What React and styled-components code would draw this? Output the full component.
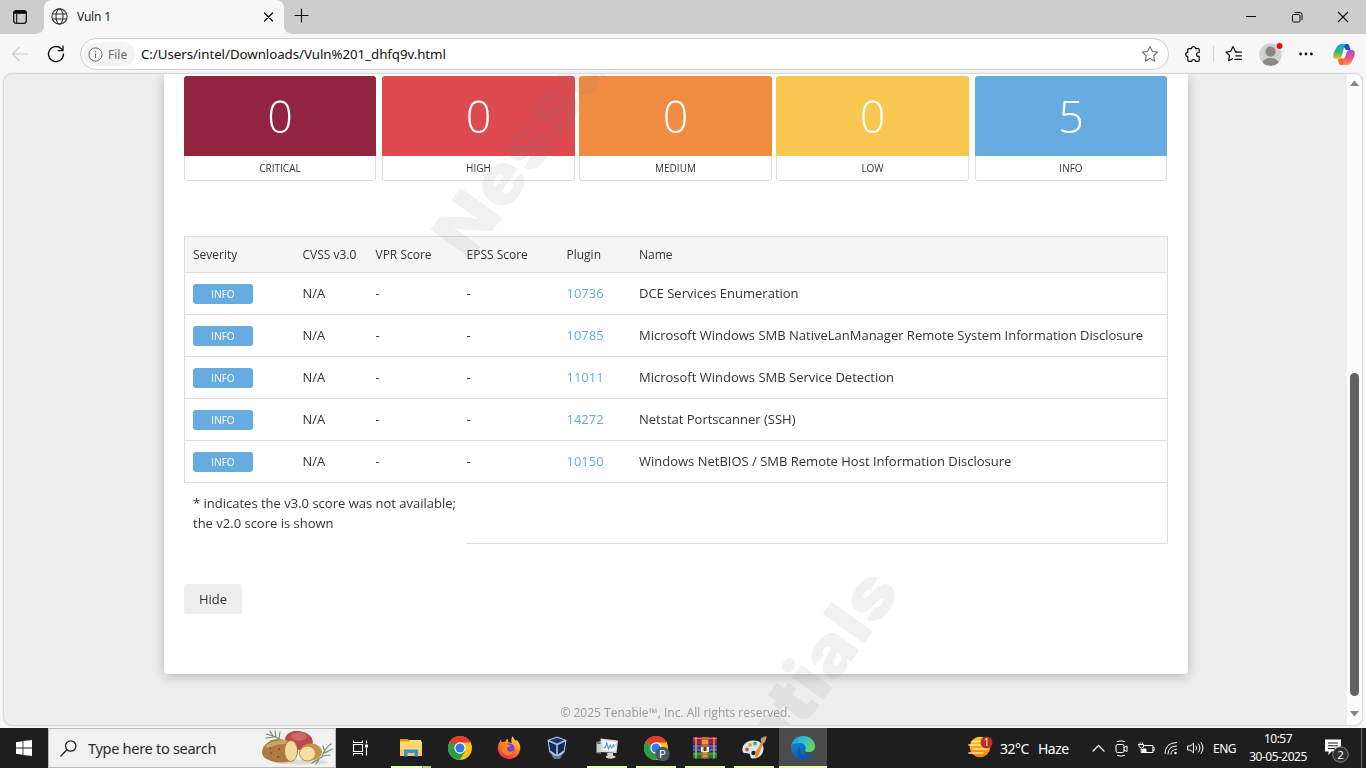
import React from "react";
import styled, { createGlobalStyle } from "styled-components";

const UI = `"Noto Sans", "Open Sans", sans-serif`;

const Global = createGlobalStyle`
  *, *::before, *::after { box-sizing: border-box; }
  body { margin: 0; overflow: hidden; font-family: "Open Sans", sans-serif; color: #333; }
  svg { display: block; flex: none; }
`;

const Screen = styled.div`
  width: 1366px;
  height: 768px;
  display: flex;
  flex-direction: column;
  background: #f7f7f7;
  overflow: hidden;
`;

/* ---------- browser chrome ---------- */
const TabStrip = styled.div`
  height: 34px;
  flex: none;
  display: flex;
  background: #cdcdcd;
`;
const TabActions = styled.div`
  width: 44px;
  display: flex;
  align-items: center;
  padding-left: 12px;
  border-bottom-right-radius: 8px;
`;
const Tab = styled.div`
  position: relative;
  width: 240px;
  display: flex;
  align-items: center;
  padding: 0 10px 2px 7px;
  background: #f7f7f7;
  border-radius: 8px 8px 0 0;
  &::before, &::after {
    content: "";
    position: absolute;
    bottom: 0;
    width: 8px;
    height: 8px;
  }
  &::before { left: -8px; background: radial-gradient(circle at 0 0, #cdcdcd 7.6px, #f7f7f7 8.2px); }
  &::after { right: -8px; background: radial-gradient(circle at 100% 0, #cdcdcd 7.6px, #f7f7f7 8.2px); }
`;
const TabTitle = styled.span`
  flex: 1;
  margin-left: 9px;
  font: 12px ${UI};
  letter-spacing: -0.2px;
  color: #1b1b1b;
`;
const NewTab = styled.div`
  padding: 8px 0 0 10px;
  flex: 1;
`;
const WindowButtons = styled.div`
  display: flex;
  align-items: center;
  gap: 34px;
  padding-right: 17px;
`;
const Toolbar = styled.div`
  height: 39px;
  flex: none;
  display: flex;
  align-items: center;
  padding: 1px 11px 0 11px;
`;
const NavButtons = styled.div`
  width: 69px;
  display: flex;
  align-items: center;
  gap: 18px;
`;
const AddressBar = styled.div`
  width: 1089px;
  height: 32px;
  display: flex;
  align-items: center;
  padding: 0 9px 0 3px;
  background: #fff;
  border: 1px solid #cfcfcf;
  border-radius: 16px;
`;
const FileChip = styled.div`
  width: 51px;
  height: 24px;
  display: flex;
  align-items: center;
  gap: 5px;
  padding-left: 4px;
  border-radius: 12px;
  background: #f3f3f3;
  font: 12px ${UI};
  color: #6b6b6b;
`;
const Url = styled.span`
  flex: 1;
  margin-left: 6px;
  font: 13.3px ${UI};
  letter-spacing: -0.05px;
  color: #111;
`;
const ToolIcons = styled.div`
  flex: 1;
  display: grid;
  grid-template-columns: 28.5px 12px 33.5px 40.5px 34px 22px;
  align-items: center;
  padding-left: 15.5px;
  margin-right: -1px;
`;
const Divider = styled.span`
  width: 1px;
  height: 16px;
  background: #cfcfcf;
`;

/* ---------- report page ---------- */
const Viewport = styled.div`
  position: relative;
  height: 651px;
  flex: none;
  margin: 1px 4px 3px;
  display: flex;
  border-radius: 8px;
  background: #eee;
  overflow: hidden;
`;
const ViewportFrame = styled.div`
  height: 655px;
  flex: none;
  filter: drop-shadow(0 0 1px rgba(0, 0, 0, 0.35));
`;
const Page = styled.div`
  position: relative;
  flex: 1;
  overflow: hidden;
`;
const Card = styled.div`
  width: 1024px;
  height: 600px;
  margin-left: 160px;
  padding: 2px 20px 0;
  background: #fff;
  border-radius: 0 0 3px 3px;
  box-shadow: 0 2px 12px rgba(0, 0, 0, 0.25);
`;
const Tiles = styled.div`
  display: flex;
  margin-bottom: 55px;
`;
const Tile = styled.div`
  width: ${(p) => p.$width}px;
  height: 105px;
  margin-right: ${(p) => p.$gap}px;
  display: flex;
  flex-direction: column;
  border-radius: 3px;
  overflow: hidden;
`;
const TileCount = styled.div`
  height: 80px;
  background: ${(p) => p.$color};
  color: #fff;
  font-size: 45px;
  font-weight: 300;
  line-height: 80px;
  text-align: center;
`;
const TileLabel = styled.div`
  flex: 1;
  border: 1px solid #ddd;
  border-top: 0;
  border-radius: 0 0 3px 3px;
  font-size: 10px;
  line-height: 24px;
  text-align: center;
`;
const Table = styled.div`
  display: flex;
  flex-direction: column;
`;
const Row = styled.div`
  display: grid;
  grid-template-columns: 109.5px 73px 91px 100px 72.5px 1fr;
  align-items: center;
  height: ${(p) => (p.$head ? 37 : 42)}px;
  padding-left: 8px;
  padding-bottom: 1px;
  font-size: ${(p) => (p.$head ? 12 : 13)}px;
  border: 1px solid #ddd;
  border-top-width: ${(p) => (p.$head ? 1 : 0)}px;
  background: ${(p) => (p.$head ? "#f5f5f5" : "#fff")};
`;
const Badge = styled.span`
  width: 60px;
  height: 20px;
  margin-top: 2px;
  border-radius: 3px;
  background: #67ace1;
  color: #fff;
  font-size: 10px;
  font-weight: 500;
  line-height: 20px;
  text-align: center;
`;
const PluginLink = styled.a`
  color: #67ace1;
`;
const NoteRow = styled.div`
  display: flex;
  height: 61px;
`;
const Note = styled.div`
  width: 282px;
  padding: 10px 0 0 9px;
  font-size: 13px;
  line-height: 20px;
  white-space: nowrap;
`;
const NoteRest = styled.div`
  flex: 1;
  border: 1px solid #ddd;
  border-width: 0 1px 1px 0;
`;
const HideButton = styled.button`
  width: 58px;
  height: 30px;
  margin-top: 40px;
  padding: 0;
  border: 0;
  border-radius: 3px;
  background: #eee;
  color: #333;
  font: 13px "Open Sans", sans-serif;
`;
const Footer = styled.div`
  margin-top: 30px;
  width: 1343px;
  font-size: 12px;
  line-height: 18px;
  text-align: center;
  color: #999;
`;
const Watermark = styled.div`
  position: absolute;
  ${(p) => (p.$end ? "right" : "left")}: ${(p) => p.$x}px;
  top: ${(p) => p.$y}px;
  font-family: Inter, sans-serif;
  font-size: 70px;
  font-weight: 900;
  line-height: 70px;
  letter-spacing: 0.5px;
  white-space: nowrap;
  color: rgba(128, 128, 128, 0.11);
  transform-origin: ${(p) => (p.$end ? "100%" : "0")} 60.5px;
  transform: rotate(-54deg) scaleX(1.09);
  pointer-events: none;
`;
const Scrollbar = styled.div`
  width: 15px;
  display: flex;
  flex-direction: column;
  align-items: center;
  background: #fcfcfc;
  padding: 6px 0 8px;
`;
const Thumb = styled.div`
  width: 9px;
  height: 323px;
  margin: 287px 0 15px;
  border-radius: 5px;
  background: #636363;
`;

/* ---------- taskbar ---------- */
const Taskbar = styled.div`
  height: 40px;
  flex: none;
  display: flex;
  background: #1e1e1e;
  color: #fff;
`;
const Square = styled.div`
  width: 48px;
  display: flex;
  align-items: center;
  justify-content: center;
`;
const Search = styled.div`
  width: 288px;
  display: flex;
  align-items: center;
  padding: 0 2px 0 11px;
  border: 1px solid #b9b9b9;
  background: #f1f1f1;
`;
const SearchText = styled.span`
  flex: 1;
  margin-left: 11px;
  font: 14.6px ${UI};
  letter-spacing: -0.33px;
  color: #2d2d2d;
  white-space: nowrap;
`;
const Apps = styled.div`
  display: flex;
  flex: 1;
  padding-left: 2px;
`;
const AppButton = styled.div`
  width: ${(p) => (p.$active ? 48 : 49)}px;
  margin-left: ${(p) => (p.$active ? 1 : 0)}px;
  display: flex;
  flex-direction: column;
  align-items: center;
  justify-content: space-between;
  padding-top: 8px;
  background: ${(p) => (p.$active ? "#4b4b4b" : "transparent")};
`;
const Underline = styled.span`
  width: ${(p) => (p.$active ? 48 : 40)}px;
  height: 2px;
  background: ${(p) => (p.$split ? "linear-gradient(90deg, #e3ffb4 31px, #82926a 31px 32px, #b5cc90 32px)" : p.$on ? "#e3ffb4" : "transparent")};
`;
const Weather = styled.div`
  width: 124px;
  display: flex;
  align-items: center;
  font: 14px ${UI};
  letter-spacing: -0.5px;
  white-space: nowrap;
`;
const Temp = styled.span`
  width: 38px;
  margin-left: 7px;
`;
const Tray = styled.div`
  width: 112px;
  display: flex;
  align-items: center;
  justify-content: space-between;
`;
const Lang = styled.span`
  width: 27px;
  margin-left: 9px;
  align-self: center;
  font: 12px ${UI};
  letter-spacing: -0.5px;
`;
const Clock = styled.div`
  width: 76px;
  display: flex;
  flex-direction: column;
  align-items: center;
  padding-top: 2px;
  font: 12px/18px ${UI};
  letter-spacing: -0.5px;
  white-space: nowrap;
`;
const Notice = styled.div`
  padding: 10px 0 0 7px;
  width: 45px;
`;
const DesktopEdge = styled.div`
  width: 5px;
  border-left: 1px solid #6b6b6b;
`;

const line = { fill: "none", stroke: "currentColor", strokeLinecap: "round", strokeLinejoin: "round" };

const TabActionsIcon = () => (
  <svg width="16" height="16" viewBox="0 0 16 16" fill="none" stroke="#111">
    <rect x="1.7" y="1.7" width="12.6" height="12.6" rx="2.6" strokeWidth="1.3" />
    <path d="M1.7 4V4a2.3 2.3 0 0 1 2.3-2.3h8a2.3 2.3 0 0 1 2.3 2.3v.3H1.7z" fill="#111" />
    <path d="M4.7 5v9" strokeWidth="1.1" />
  </svg>
);
const Globe = () => (
  <svg width="17" height="17" viewBox="0 0 17 17" fill="none" stroke="#333" strokeWidth="1.1">
    <circle cx="8.5" cy="8.5" r="7.6" />
    <ellipse cx="8.5" cy="8.5" rx="3.5" ry="7.6" />
    <path d="M1.6 6h13.8M1.6 11h13.8" />
  </svg>
);
const Star = ({ lines }) => (
  <svg width="18" height="18" viewBox="0 0 18 18" {...line} stroke={lines ? "#111" : "#777"} strokeWidth="1.2">
    {lines ? (
      <path d="M11.5 6.5 10.3 6.3 8 1.6 5.700 6.300 1 7l3.500 3.500-.9 5.200L7.500 13.700M10.500 7.200h6M11 10.800h5.500M9.800 14.400h6.700" />
    ) : (
      <path d="m9 1.400 2.350 4.900 5.350.7-3.900 3.750.95 5.350L9 13.500l-4.750 2.600.95-5.350L1.300 7l5.350-.7z" />
    )}
  </svg>
);
const Puzzle = () => (
  <svg width="17" height="17" viewBox="0 0 17 17" {...line} stroke="#111" strokeWidth="1.2">
    <path d="M3.800 2.700h2.700a2 2 0 0 1 4 0h2.700a1 1 0 0 1 1 1v2.800h-.7a1.800 1.800 0 0 0 0 3.900h.7v3.900a1 1 0 0 1-1 1H10.600a2.100 2.100 0 0 0-4.100 0H3.800a1 1 0 0 1-1-1v-3.700a2.100 2.100 0 0 1 0-4.200V3.700a1 1 0 0 1 1-1z" />
  </svg>
);
const Avatar = () => (
  <svg width="24" height="24" viewBox="0 0 24 24">
    <defs><clipPath id="av"><circle cx="11.500" cy="12.500" r="11.200" /></clipPath></defs>
    <circle cx="11.500" cy="12.500" r="11.200" fill="#d2d0ce" />
    <g clipPath="url(#av)" fill="#8a8886">
      <circle cx="11.500" cy="9.700" r="5.100" />
      <ellipse cx="11.500" cy="21" rx="8" ry="5" />
    </g>
    <circle cx="20.500" cy="4" r="3.300" fill="#e00b0b" stroke="#f7f7f7" strokeWidth=".6" />
  </svg>
);
const Copilot = () => (
  <svg width="22" height="21" viewBox="0 0 22 21">
    <defs>
      <linearGradient id="cpa" x1="0" y1="0" x2="0" y2="1">
        <stop offset="0" stopColor="#18a8ef" /><stop offset=".5" stopColor="#38b27a" /><stop offset="1" stopColor="#f5c518" />
      </linearGradient>
      <linearGradient id="cpb" x1="0" y1="0" x2="0" y2="1">
        <stop offset="0" stopColor="#a44be8" /><stop offset=".5" stopColor="#ec4f8c" /><stop offset="1" stopColor="#ff9348" />
      </linearGradient>
    </defs>
    <path d="M9 0h5.300q1.500 0 2 1.500L17.500 6H13z" fill="#1b4fc9" />
    <path d="M5 15q.8 6 3 6h5q1.500-.3 2-2l1-4.500-7-1z" fill="#f2683c" />
    <path d="M6 .8Q6.600 0 8 0h5q-1 .4-1.500 2L8.500 12.500q-.8 2.500-3 2.500H3Q.2 15 .2 12q0-2 .8-4L4 2.500Q4.800 1.200 6 .8z" fill="url(#cpa)" />
    <path d="M16 6h3q2.800 0 2.800 3 0 2-.8 4l-2.800 5.500Q16.500 21 14 21H9q1-.4 1.500-2l3-10.500Q14.200 6 16 6z" fill="url(#cpb)" />
    <path d="M12 6.500h2.500Q13.200 7 12.700 8.800L11 14.500H8.300q.7-.7 1-1.800z" fill="#fff" />
  </svg>
);

const ChromeLogo = ({ profile }) => (
  <svg width={profile ? 28 : 24} height="26" viewBox={profile ? "-2 0 28 26" : "0 0 24 26"}>
    <circle cx="12" cy="12" r="12" fill="#fbc116" />
    <path d="M12 12 1.600 6A12 12 0 0 1 22.400 6H12z" fill="#e33b2e" />
    <path d="M1.600 6A12 12 0 0 0 11.800 24L17.200 15 12 12z" fill="#2a9d4b" />
    <path d="M12 12h10.400V6H12z" fill="#fbc116" />
    <path d="M1.600 6A12 12 0 0 1 22.400 6.500H12z" fill="#e33b2e" />
    <circle cx="12" cy="12" r="5.700" fill="#fff" />
    <circle cx="12" cy="12" r="4.500" fill="#3479e8" />
    {profile && (
      <g>
        <circle cx="18.500" cy="18" r="7.300" fill="#455a64" />
        <text x="18.500" y="21.700" textAnchor="middle" fontFamily="Roboto" fontSize="10" fill="#fff">P</text>
      </g>
    )}
  </svg>
);
const Explorer = () => (
  <svg width="22" height="24" viewBox="0 0 22 24">
    <path d="M0 3h8l1.500 2v3H0z" fill="#d99a1a" />
    <path d="M9 4h12v4H9zM0 5.500h22V20H0z" fill="#ffd76a" />
    <path d="M0 14h22v6H0z" fill="#f9cb52" />
    <path d="M4 20.500V14.500q0-1 1-1h12q1 0 1 1v6h-3.500V17h-7v3.500z" fill="#3691d8" />
  </svg>
);
const Firefox = () => (
  <svg width="24" height="24" viewBox="0 0 24 24">
    <defs>
      <linearGradient id="ff" x1=".8" y1="0" x2=".3" y2="1">
        <stop offset="0" stopColor="#ffe44b" /><stop offset=".45" stopColor="#ff8a16" /><stop offset="1" stopColor="#f0226b" />
      </linearGradient>
    </defs>
    <path d="M15.500.3q1 2.600 3.500 4.700l.8-1.200q3.800 4 3.500 9A11.300 11.300 0 0 1 .8 13Q.6 8 3.800 3.500l1 3q1.500-1 3.500-.8Q9 3.500 10.800 2.800q-.3 2.400 1 3.400l3 .8Q13.500 3.500 15.500.3z" fill="url(#ff)" />
    <circle cx="12" cy="12.800" r="5.600" fill="#7a3fe0" />
    <path d="M4.500 7.500q4-.8 7 1.200l2 .8q-.3 1.500-3 1.700-1.500 3 1.500 4.300 3 .8 5-1.500-1 5-6 5.200-6-.3-6.500-6z" fill="#ff8118" />
  </svg>
);
const VBox = () => (
  <svg width="24" height="24" viewBox="0 0 24 24">
    <path d="M11 .5 20.500 4l-1.800 12L11 23 3.300 16 1.500 4z" fill="#aec4dc" />
    <path d="M11 1.700 18.500 4.300 11 7.500 3.500 4.300z" fill="#163a6d" />
    <path d="M2.800 5.800 10.200 9v9.500L4.300 14.500zM19.200 5.800 11.800 9v9.500l5.900-4z" fill="#102c57" />
    <path d="M5 18q6 4 12 0l-3 5H8z" fill="#5d7897" />
  </svg>
);
const Monitor = () => (
  <svg width="24" height="24" viewBox="0 0 24 24">
    <path d="M1 6l5-1.500V18l-5-1z" fill="#6f7676" />
    <path d="M2 8h4v8H2z" fill="#ccd2d0" />
    <path d="M5.500 2.500 23 4.500 21.500 17 6 16z" fill="#d9dddb" />
    <path d="M7.500 4.500 21 6l-1 9-12-1z" fill="#f7fbfb" />
    <path d="m8.500 12 2-1 1.200-4 1.800 6 1.700-4 1.500 3 1.800-3 .8 2" fill="none" stroke="#3f9ccc" strokeWidth="1.100" />
    <path d="M12 17h6v2.500q3 .5 2.500 2-4 2-9 .5-1.500-2 1-2.500z" fill="#d0d0cc" />
  </svg>
);
const WinRar = () => (
  <svg width="24" height="24" viewBox="0 0 24 24">
    <rect y="1" width="24" height="7" rx="1" fill="#a51c42" /><path d="M0 2.500h24" stroke="#e06a86" />
    <rect y="8.500" width="24" height="7" rx="1" fill="#46439c" /><path d="M0 10h24M0 14h24" stroke="#8281c9" strokeWidth=".8" />
    <rect y="16" width="24" height="6.500" rx="1" fill="#1b7a34" /><path d="M0 18h24" stroke="#4dbb63" />
    <path d="M3 1v21.500M21 1v21.500" stroke="#d5ba7a" strokeWidth="1.200" />
    <path d="M8.500 1h7v21.500h-7z" fill="#b9722e" />
    <path d="M9 4h6v4H9z" fill="#ef9642" /><path d="M8 11h8v5H8z" fill="#f7e4cc" /><path d="M10.500 11v4h3v-4z" fill="#5b392b" />
    <path d="M10 17h4M10 20h4" stroke="#f0c183" />
  </svg>
);
const Paint = () => (
  <svg width="26" height="24" viewBox="0 0 26 24">
    <path d="M13 4.500C5 4 .5 10 1.500 15c.8 3.500 5 1.500 7 3 2 1.800-.2 4 3 4.500 6 .5 11-4 11-10 0-5-4.500-8-9.500-8z" fill="#d6e9f3" />
    <circle cx="6" cy="13.500" r="2" fill="#e04b3c" /><circle cx="9" cy="9" r="2" fill="#e9a63e" /><circle cx="14" cy="7.500" r="2" fill="#4cab52" /><circle cx="12.500" cy="17" r="2.200" fill="#1e1e1e" />
    <path d="M14.500 22.500Q13 16 17 12l4.500-8 1.500 1-3.500 9Q18 20 14.500 22.500z" fill="#e48b35" />
    <path d="M20.500 6q-2.500-4 2-5l3-1q0 5-3 7.500z" fill="#c99a66" />
  </svg>
);
const Edge = () => (
  <svg width="24" height="24" viewBox="0 0 24 24">
    <defs>
      <linearGradient id="ea" x1="0" y1=".2" x2="1" y2=".5"><stop offset="0" stopColor="#219bdf" /><stop offset=".55" stopColor="#35c1c9" /><stop offset="1" stopColor="#66d453" /></linearGradient>
      <linearGradient id="eb" x1="0" y1="0" x2=".6" y2="1"><stop offset="0" stopColor="#168bdd" /><stop offset="1" stopColor="#0c59a4" /></linearGradient>
    </defs>
    <circle cx="12" cy="12" r="12" fill="url(#eb)" />
    <path d="M.3 9.500C1.500 3.500 6.500 0 12 0c6.500 0 12 4.600 12 10.300 0 4-3 6-6.200 6-2.800 0-4.200-1-3.800-2 1.800-2.500 0-6.800-4.500-7.300C5.500 6.700 1.800 7.500.3 9.500z" fill="url(#ea)" />
    <path d="M14 14.300c-.4 1 1 2 3.800 2 2.500 0 4.900-1.200 5.800-3.600L24.500 18l-2 .5c-3 1.300-7.500.8-9.200-1.500q-.8-1.500.7-2.700z" fill="#4b4b4b" />
    <path d="M9 10.500c-2 6 3 10.500 9 9.500l4-1.700Q18.500 24 12 24C5 23 5 14 9 10.500z" fill="#1057a3" />
  </svg>
);
const Potatoes = () => (
  <svg width="72" height="38" viewBox="0 0 72 38">
    <ellipse cx="40" cy="33" rx="27" ry="2.500" fill="#dcd8d4" />
    <g fill="none" stroke="#7d8d6c" strokeWidth="1.200" strokeLinecap="round">
      <path d="M5 5q10 2 16 7M9 2l3 5M14 2l1 6M19 3l-1 7M5 9l8-1M9 12l9-2" />
    </g>
    <ellipse cx="38" cy="11.500" rx="14" ry="9.500" fill="#b94b4c" transform="rotate(10 38 11.500)" />
    <ellipse cx="38" cy="7.500" rx="8" ry="4" fill="#d77a74" opacity=".65" />
    <path d="M1 22Q2 14 13 11q14-2 20 3 4 10-2 18-11 3-21 0Q0 29 1 22z" fill="#ae7a42" />
    <path d="M7 17q8-4 17-4" stroke="#cba46c" strokeWidth="4" fill="none" strokeLinecap="round" />
    <path d="M10 24h.5M17 28h.5M18 20h.5M9 19h.5" stroke="#704619" strokeWidth="1.500" strokeLinecap="round" />
    <ellipse cx="30" cy="22" rx="6.500" ry="10.500" fill="#f2d9a0" stroke="#b27e39" />
    <ellipse cx="50" cy="23" rx="11" ry="8.500" fill="#c39645" />
    <ellipse cx="46.500" cy="24.500" rx="8" ry="7.500" fill="#f5dda3" stroke="#b88d3d" />
    <path d="M70 15q-5 3-9 12M62 17l2 6M71 20l-7 4M69 26l-7 1M51 34l10-6M55 35l3-5" fill="none" stroke="#7d8d6c" strokeWidth="1.200" strokeLinecap="round" />
  </svg>
);

const tiles = [
  ["0", "CRITICAL", "#91243e", 192, 6],
  ["0", "HIGH", "#dd4b50", 193, 4],
  ["0", "MEDIUM", "#f18c43", 193, 4],
  ["0", "LOW", "#f8c851", 193, 6],
  ["5", "INFO", "#67ace1", 192, 0],
];
const rows = [
  ["10736", "DCE Services Enumeration"],
  ["10785", "Microsoft Windows SMB NativeLanManager Remote System Information Disclosure"],
  ["11011", "Microsoft Windows SMB Service Detection"],
  ["14272", "Netstat Portscanner (SSH)"],
  ["10150", "Windows NetBIOS / SMB Remote Host Information Disclosure"],
];
const apps = [
  { icon: <Explorer />, on: true, split: true },
  { icon: <ChromeLogo /> },
  { icon: <Firefox /> },
  { icon: <VBox /> },
  { icon: <Monitor />, on: true },
  { icon: <ChromeLogo profile />, on: true },
  { icon: <WinRar />, on: true },
  { icon: <Paint />, on: true },
  { icon: <Edge />, on: true, active: true },
];

export default function App() {
  return (
    <Screen>
      <Global />
      <TabStrip>
        <TabActions><TabActionsIcon /></TabActions>
        <Tab>
          <Globe />
          <TabTitle>Vuln 1</TabTitle>
          <svg width="11" height="11" viewBox="0 0 11 11" {...line} stroke="#111" strokeWidth="1.3"><path d="M1.500 2l8 8M9.500 2l-8 8" /></svg>
        </Tab>
        <NewTab>
          <svg width="15" height="15" viewBox="0 0 15 15" {...line} stroke="#111" strokeWidth="1.1"><path d="M7.500 1v13M1 7.500h13" /></svg>
        </NewTab>
        <WindowButtons>
          <svg width="12" height="12" viewBox="0 0 12 12"><path d="M1 5.500h10" stroke="#111" /></svg>
          <svg width="12" height="12" viewBox="0 0 12 12" fill="none" stroke="#111"><rect x="1.500" y="3.500" width="7.500" height="7.500" rx="1.200" /><path d="M3.500 1.500h5.500q2 0 2 2V9" /></svg>
          <svg width="12" height="12" viewBox="0 0 12 12" stroke="#111" strokeWidth="1.100"><path d="M1 1l10 10M11 1 1 11" /></svg>
        </WindowButtons>
      </TabStrip>

      <Toolbar>
        <NavButtons>
          <svg width="18" height="16" viewBox="0 0 18 16" {...line} stroke="#cbcbcb" strokeWidth="1.2"><path d="M16.500 8H1.500M8 1.500 1.500 8 8 14.500" /></svg>
          <svg width="18" height="18" viewBox="0 0 18 18" {...line} stroke="#111" strokeWidth="1.3"><path d="M16.500 9a7.500 7.500 0 1 1-2.300-5.400L16 5.500M16 1v4.700h-4.700" /></svg>
        </NavButtons>
        <AddressBar>
          <FileChip>
            <svg width="15" height="15" viewBox="0 0 15 15" fill="none" stroke="#6b6b6b"><circle cx="7.500" cy="7.500" r="6.600" /><path d="M7.500 6.500v4.500M7.500 4v1.200" /></svg>
            File
          </FileChip>
          <Url>C:/Users/intel/Downloads/Vuln%201_dhfq9v.html</Url>
          <Star />
        </AddressBar>
        <ToolIcons>
          <Puzzle />
          <Divider />
          <Star lines />
          <Avatar />
          <svg width="14" height="4" viewBox="0 0 14 4" fill="#111"><circle cx="1.600" cy="2" r="1.400" /><circle cx="7" cy="2" r="1.400" /><circle cx="12.400" cy="2" r="1.400" /></svg>
          <Copilot />
        </ToolIcons>
      </Toolbar>

      <ViewportFrame>
        <Viewport>
          <Page>
            <Card>
              <Tiles>
                {tiles.map(([count, label, color, width, gap]) => (
                  <Tile key={label} $width={width} $gap={gap}>
                    <TileCount $color={color}>{count}</TileCount>
                    <TileLabel>{label}</TileLabel>
                  </Tile>
                ))}
              </Tiles>
              <Table>
                <Row $head>
                  <span>Severity</span><span>CVSS v3.0</span><span>VPR Score</span>
                  <span>EPSS Score</span><span>Plugin</span><span>Name</span>
                </Row>
                {rows.map(([plugin, name]) => (
                  <Row key={plugin}>
                    <Badge>INFO</Badge><span>N/A</span><span>-</span><span>-</span>
                    <PluginLink>{plugin}</PluginLink><span>{name}</span>
                  </Row>
                ))}
                <NoteRow>
                  <Note>* indicates the v3.0 score was not available;<br />the v2.0 score is shown</Note>
                  <NoteRest />
                </NoteRow>
              </Table>
              <HideButton>Hide</HideButton>
            </Card>
            <Footer>© 2025 Tenable™, Inc. All rights reserved.</Footer>
            <Watermark $x={466} $y={128}>Nessus</Watermark>
            <Watermark $end $x={445} $y={456.5}>Essentials</Watermark>
          </Page>
          <Scrollbar>
            <svg width="9" height="6" viewBox="0 0 9 6" fill="#858585"><path d="M0 6 4.500.5 9 6z" /></svg>
            <Thumb />
            <svg width="9" height="6" viewBox="0 0 9 6" fill="#858585"><path d="M0 0h9L4.500 5.500z" /></svg>
          </Scrollbar>
        </Viewport>
      </ViewportFrame>

      <Taskbar>
        <Square>
          <svg width="16" height="16" viewBox="0 0 16 16" fill="#fff"><path d="M0 2.200 6.600 1.200v6.400H0zM7.400 1.100 16 0v7.600H7.400zM0 8.400h6.600v6.400L0 13.800zM7.400 8.400H16V16l-8.600-1.100z" /></svg>
        </Square>
        <Search>
          <svg width="17" height="17" viewBox="0 0 17 17" {...line} stroke="#222" strokeWidth="1.300"><circle cx="10.700" cy="6" r="5.200" /><path d="M7 9.800.8 16" /></svg>
          <SearchText>Type here to search</SearchText>
          <Potatoes />
        </Search>
        <Square>
          <svg width="17" height="16" viewBox="0 0 17 16" fill="none" stroke="#fff" strokeWidth="1.100"><path d="M1.500.5v2h9v-2M1.500 15.500v-2h9v2M1.500 4.500h9v7h-9zM14.500.5v3M14.500 8v7.500" /><path d="M13 4.500h3v3h-3z" fill="#fff" stroke="none" /></svg>
        </Square>
        <Apps>
          {apps.map((a, i) => (
            <AppButton key={i} $active={a.active}>
              {a.icon}
              <Underline $on={a.on} $split={a.split} $active={a.active} />
            </AppButton>
          ))}
        </Apps>
        <Weather>
          <svg width="25" height="24" viewBox="0 0 25 24">
            <defs><linearGradient id="sun" x1="0" y1="0" x2="0" y2="1"><stop offset="0" stopColor="#ffcf1a" /><stop offset="1" stopColor="#f57b16" /></linearGradient></defs>
            <circle cx="12" cy="11" r="10.300" fill="url(#sun)" />
            <path d="M4 5.500h10M1 9h13M5 13h15M1 17h14" stroke="#ffe9a2" strokeWidth="1.600" strokeLinecap="round" />
            <circle cx="18.500" cy="6.500" r="6" fill="#c42b1c" />
            <text x="18.300" y="10.200" textAnchor="middle" fontFamily="Noto Sans" fontSize="10" fill="#fff">1</text>
          </svg>
          <Temp>32°C</Temp>
          <span>Haze</span>
        </Weather>
        <Tray>
          <svg width="13" height="8" viewBox="0 0 13 8" {...line} strokeWidth="1.200"><path d="M1 7l5.500-5.500L12 7" /></svg>
          <svg width="14" height="17" viewBox="-2 0 14 17" {...line}><rect x="0" y="4.500" width="8" height="8" rx="1.500" /><path d="M8 7.500 11 6v5.500L8 10M1.500 1.500q3.500-1.500 7 0M1.500 15.500q3.500 1.500 7 0" /></svg>
          <svg width="17" height="13" viewBox="0 0 17 13" {...line}><path d="M6.500 3.500h8.500v7H4.500V8M15 5.500h1.200v3H15M1 2.500h4.500v2.500q-2 2-4 0zM2 .8v1.500M4.500.8v1.500M3.200 6.500v4H5" /><path d="M5 7h3v3H5z" fill="#fff" /></svg>
          <svg width="14" height="14" viewBox="0 0 14 14" {...line}><path d="M1 12.500Q1 2 12.500 1.500M4 13q0-8 8.500-8M7 13q0-4.500 5.500-4.800" /><circle cx="11.500" cy="12" r="1.300" fill="#fff" stroke="none" /></svg>
          <svg width="17" height="14" viewBox="0 0 17 14" {...line}><path d="M1 5h2.500L6.500 2v10L3.500 9H1zM9 5q1.500 2 0 4M11.500 3q3 4 0 8M14 1.500q4 5.500 0 11" /></svg>
        </Tray>
        <Lang>ENG</Lang>
        <Clock><span>10:57</span><span>30-05-2025</span></Clock>
        <Notice>
          <svg width="28" height="28" viewBox="0 0 28 28">
            <path d="M2 1.500h16v12h-9.500L5.500 17v-3.500H2z" fill="#fff" />
            <path d="M5 5h10M5 7.800h10M5 10.500h7" stroke="#1e1e1e" />
            <circle cx="17.500" cy="16.500" r="7.700" fill="#303030" stroke="#8a8a8a" />
            <text x="17.500" y="20.700" textAnchor="middle" fontFamily="Noto Sans" fontSize="11.500" fill="#fff">2</text>
          </svg>
        </Notice>
        <DesktopEdge />
      </Taskbar>
    </Screen>
  );
}
